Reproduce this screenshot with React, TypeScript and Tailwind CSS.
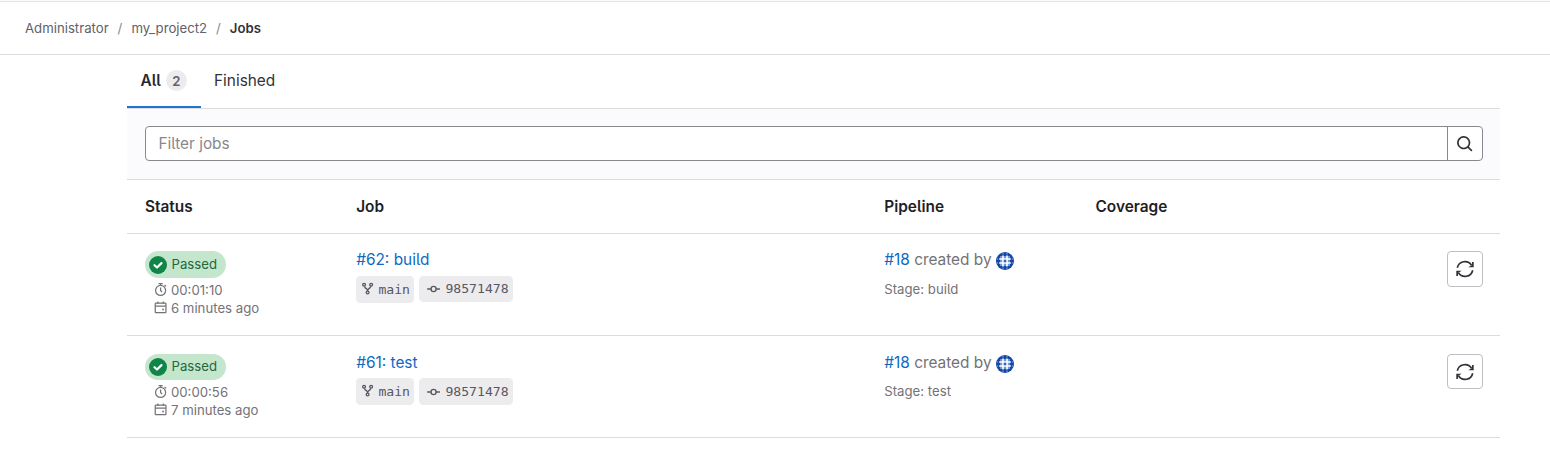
import React from 'react';

type Job = { id: number; name: string; duration: string; finished: string };

const jobs: Job[] = [
  { id: 62, name: 'build', duration: '00:01:10', finished: '6 minutes ago' },
  { id: 61, name: 'test', duration: '00:00:56', finished: '7 minutes ago' },
];

const SearchIcon = () => (
  <svg viewBox="0 0 16 16" className="size-[17.6px]" fill="currentColor">
    <path
      fillRule="evenodd"
      d="M11.5 7a4.5 4.5 0 1 1-9 0 4.5 4.5 0 0 1 9 0zm-.82 4.74a6 6 0 1 1 1.06-1.06l2.79 2.79a.75.75 0 1 1-1.06 1.06l-2.79-2.79z"
    />
  </svg>
);

const RetryIcon = () => (
  <svg viewBox="0 0 18 18" className="size-[18px]" fill="none" stroke="currentColor" strokeWidth="1.7">
    <path d="M1.300 7.800A7.800 7.800 0 0 1 15.500 5.200" />
    <path d="M16.700 10.200A7.800 7.800 0 0 1 2.500 12.800" />
    <path d="M17.700 2v5.300h-5.400l3.700-2.300V2z" fill="currentColor" stroke="none" />
    <path d="M.3 16v-5.300h5.400L2 13v3z" fill="currentColor" stroke="none" />
  </svg>
);

const TimerIcon = () => (
  <svg viewBox="0 0 16 16" className="size-[13.2px] shrink-0" fill="none" stroke="currentColor" strokeWidth="1.5">
    <circle cx="8" cy="9" r="6.1" />
    <path d="M8 5.500V9l1.800 2M5.500.9h5M8 1v2M12.800 2.200l1.900 1.900" />
  </svg>
);

const CalendarIcon = () => (
  <svg viewBox="0 0 16 16" className="size-[13.2px] shrink-0" fill="none" stroke="currentColor" strokeWidth="1.5">
    <rect x="1.500" y="2.700" width="13" height="11.500" rx=".8" />
    <path d="M1.500 6.300h13M4.700.5v2.800M11.300.5v2.800" />
    <rect x="10" y="9.300" width="2" height="2" fill="currentColor" stroke="none" />
  </svg>
);

const BranchIcon = () => (
  <svg viewBox="0 0 16 16" className="-mt-[2px] size-[13.2px] shrink-0" fill="none" stroke="currentColor" strokeWidth="1.6">
    <circle cx="3.700" cy="3.400" r="1.700" />
    <circle cx="12.300" cy="3.400" r="1.700" />
    <circle cx="8" cy="12.800" r="1.700" />
    <path d="M4.200 5.200c.4 1.800 1.200 2.300 2.300 2.900C7.500 8.700 8 9.500 8 11c0-1.500.5-2.300 1.500-2.900 1.100-.6 1.900-1.100 2.300-2.900" />
  </svg>
);

const CommitIcon = () => (
  <svg viewBox="0 0 16 16" className="size-[13.2px] shrink-0" fill="none" stroke="currentColor" strokeWidth="1.6">
    <circle cx="8" cy="8.500" r="3.100" />
    <path d="M.8 8.500h4M11.200 8.500h4" strokeLinecap="round" />
  </svg>
);

const PassedIcon = () => (
  <svg viewBox="0 0 18 18" className="size-[18px] shrink-0">
    <circle cx="9" cy="9" r="9" fill="#108548" />
    <path d="M5.500 9.200l2.500 2.300 4.500-4.400" fill="none" stroke="#fff" strokeWidth="2.200" strokeLinecap="round" strokeLinejoin="round" />
  </svg>
);

const Avatar = () => (
  <svg viewBox="0 0 18 18" className="size-[18px] shrink-0 rounded-full">
    <rect width="18" height="18" fill="#1247a6" />
    <path d="M4 4h10v10H4z" fill="#6f95d6" />
    <path d="M6.200 3.500h1.600v11H6.200zM10.200 3.500h1.600v11h-1.600zM3.200 6.200h11.600v1.600H3.200zM3.200 10.200h11.600v1.600H3.200z" fill="#fff" />
    <path d="M7.800 7.800h2.400v2.400H7.800z" fill="#3467ba" />
    <path
      d="M6.500 1h1v1.500h-1zM10.500 1h1v1.500h-1zM6.500 15.500h1V17h-1zM10.500 15.500h1V17h-1zM1 6.500h1.200v1H1zM1 10.500h1.200v1H1zM15.800 6.500H17v1h-1.200zM15.800 10.500H17v1h-1.200z"
      fill="#8fb0e4"
    />
  </svg>
);

const columns = 'grid grid-cols-[211.2px_528.1px_211.2px_211.2px_1fr] border-b border-[#dcdcde]';
const chip = "flex items-center rounded-[4.4px] bg-[#ececef] font-['DejaVu_Sans_Mono',monospace] text-[13.15px] text-[#59585f]";

const JobRow = ({ job, lower }: { job: Job; lower: boolean }) => (
  <div className={`${columns} h-[102px]`}>
    <div className={`flex flex-col items-start pl-[18px] text-[13.2px] text-[#737278] ${lower ? 'pt-[18px]' : 'pt-[17px]'}`}>
      <div className={`flex w-[81px] items-center gap-[5px] rounded-full bg-[#c3e6cd] pl-[3.5px] text-[#24663b] ${lower ? 'h-[26px]' : 'h-[27px]'}`}>
        <PassedIcon />
        <span className={lower ? '-mt-[2px]' : '-mt-px'}>Passed</span>
      </div>
      <div className="mt-[3px] ml-[9px] flex h-[18px] items-center gap-[3.8px]">
        <TimerIcon />
        {job.duration}
      </div>
      <div className="ml-[9px] flex h-[18px] items-center gap-[3.8px]">
        <CalendarIcon />
        {job.finished}
      </div>
    </div>
    <div className={`pl-[18px] ${lower ? 'pt-[16px]' : 'pt-[15px]'}`}>
      <a className="block h-[22px] leading-[22px] text-[#1068bf]">{`#${job.id}: ${job.name}`}</a>
      <div className={`flex items-start gap-[5px] ${lower ? 'mt-[4px]' : 'mt-[5px]'}`}>
        <span className={`${chip} h-[27px] w-[58px] gap-[4px] pl-[5px]`}>
          <BranchIcon />
          main
        </span>
        <span className={`${chip} w-[94px] gap-[5px] pl-[8px] ${lower ? 'h-[27px]' : 'h-[26px]'}`}>
          <CommitIcon />
          98571478
        </span>
      </div>
    </div>
    <div className={`pl-[18px] text-[#737278] ${lower ? 'pt-[16px]' : 'pt-[15px]'}`}>
      <div className="flex h-[24px] items-center gap-1">
        <span className="-mt-[2px]">
          <a className="text-[#1068bf]">#18</a> created by
        </span>
        <Avatar />
      </div>
      <div className={`text-[13.2px] leading-[20px] ${lower ? 'mt-[5px]' : 'mt-[6px]'}`}>Stage: {job.name}</div>
    </div>
    <div />
    <div className={`flex justify-end pr-[17px] ${lower ? 'pt-[18px]' : 'pt-[17px]'}`}>
      <button className={`flex w-9 items-center justify-center rounded-[4px] border border-[#bfbfc3] text-[#333238] ${lower ? 'h-[35px]' : 'h-[36px]'}`}>
        <RetryIcon />
      </button>
    </div>
  </div>
);

export default function App() {
  return (
    <div className="h-[473px] overflow-hidden bg-white font-['Inter',sans-serif] text-[15.4px] leading-[22px] text-[#333238] [font-feature-settings:'cv05']">
      <div className="h-px bg-[#fafafa]" />
      <nav className="flex h-[54px] items-center border-t border-b border-t-[#e6e6e8] border-b-[#dcdcde] pl-[25px] text-[13.2px] text-[#626168]">
        <span>Administrator</span>
        <span className="mx-[9px] text-[#89888d]">/</span>
        <span>my_project2</span>
        <span className="mx-[9px] text-[#89888d]">/</span>
        <span className="font-semibold text-[#333238]">Jobs</span>
      </nav>
      <main className="ml-[127px] w-[1373px]">
        <div className="flex h-[54px] border-b border-[#dcdcde]">
          <div className="flex h-[53px] w-[74px] items-center border-b-2 border-[#1f75cb] pl-[13.5px] font-semibold text-[#28272d]">
            <span>All</span>
            <span className="ml-[5px] flex size-[21px] items-center justify-center rounded-full bg-[#ececef] text-[13.2px] text-[#626168]">2</span>
          </div>
          <div className="flex h-[51px] items-center pl-[13px]">Finished</div>
        </div>
        <div className="flex h-[71px] border-b border-[#dcdcde] bg-[#fbfafd] pt-[17px] pr-[17px] pl-[18px]">
          <div className="flex h-[35px] flex-1 overflow-hidden rounded-[4px] border border-[#89888d] bg-white">
            <div className="flex flex-1 items-center pl-[12.5px] text-[#89888d]">Filter jobs</div>
            <button className="flex w-[35px] items-center justify-center border-l border-[#89888d]">
              <SearchIcon />
            </button>
          </div>
        </div>
        <div className={`${columns} h-[54px] items-center font-semibold text-[#1f1e24]`}>
          {['Status', 'Job', 'Pipeline', 'Coverage'].map((title) => (
            <div key={title} className="pl-[18px]">{title}</div>
          ))}
        </div>
        {jobs.map((job, index) => (
          <JobRow key={job.id} job={job} lower={index > 0} />
        ))}
      </main>
    </div>
  );
}
